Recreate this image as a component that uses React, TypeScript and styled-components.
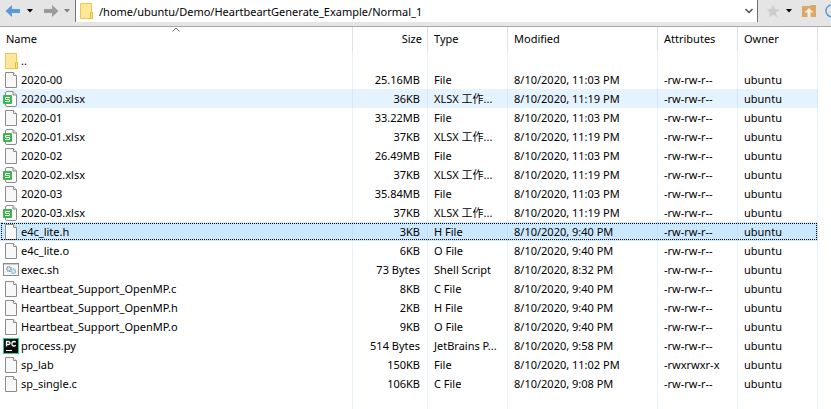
import React, { useState } from "react";
import styled, { createGlobalStyle } from "styled-components";

const GlobalStyle = createGlobalStyle`
  *, *::before, *::after { box-sizing: border-box; }
  body {
    margin: 0;
    background: #fff;
    color: #000;
    font-family: "Noto Sans", "Noto Sans CJK SC", sans-serif;
    font-size: 11px;
    line-height: 18px;
  }
  button, input { font: inherit; color: inherit; }
`;

const Page = styled.div`
  display: flex;
  flex-direction: column;
  min-height: 100vh;
  overflow: hidden;
`;

const Toolbar = styled.div`
  display: flex;
  height: 27px;
  padding-bottom: 4px;
  background: #e5e5e5;
  border-bottom: 1px solid #a9a9a9;
`;

const ToolGroup = styled.div<{ $side: "left" | "right" }>`
  display: flex;
  flex: none;
  align-items: center;
  width: ${(p) => (p.$side === "left" ? 75 : 73)}px;
  padding-left: ${(p) => (p.$side === "left" ? 4 : 6)}px;
  overflow: hidden;
`;

const IconButton = styled.button<{ $width: number }>`
  display: flex;
  flex: none;
  align-items: center;
  justify-content: center;
  width: ${(p) => p.$width}px;
  height: 20px;
  padding: 0;
  border: 0;
  background: none;
`;

const AddressBar = styled.div`
  display: flex;
  flex: 1;
  align-items: center;
  min-width: 0;
  padding-left: 2px;
  background: #fff;
  border: solid #707070;
  border-width: 0 1px;
`;

const PathInput = styled.input`
  flex: 1;
  min-width: 0;
  height: 22px;
  padding: 0;
  margin-left: 5px;
  border: 0;
  outline: 0;
  background: transparent;
`;

const ListArea = styled.main`
  display: flex;
  flex: 1;
  padding-right: 13px;
`;

const FileTable = styled.table`
  width: 100%;
  table-layout: fixed;
  border-collapse: separate;
  border-spacing: 0;
`;

const HeadCell = styled.th<{ $width?: number; $align?: "right" }>`
  position: relative;
  width: ${(p) => (p.$width ? `${p.$width}px` : "auto")};
  height: 24px;
  padding: 0;
  border-right: 1px solid #e0e0e0;
  font-weight: 400;
  text-align: ${(p) => p.$align ?? "left"};
`;

const HeadButton = styled.button`
  width: 100%;
  height: 24px;
  padding: 0 5px 0 6px;
  border: 0;
  background: none;
  text-align: inherit;
`;

const SortMark = styled.svg`
  position: absolute;
  top: 0;
  left: 50%;
  margin-left: -4px;
`;

const Row = styled.tr<{ $state?: "hover" | "selected" }>`
  height: 19px;
  background: ${(p) =>
    p.$state === "selected" ? "#cce8ff" : p.$state === "hover" ? "#e5f3ff" : "transparent"};
  outline: ${(p) => (p.$state === "selected" ? "1px dotted #000" : "none")};
  outline-offset: -2px;
`;

const Cell = styled.td<{ $align?: "right" }>`
  height: 19px;
  padding: 0 7px 0 6px;
  border-right: 1px solid rgba(120, 180, 235, 0.17);
  line-height: 18px;
  overflow: hidden;
  text-align: ${(p) => p.$align ?? "left"};
  text-overflow: ellipsis;
  white-space: nowrap;
`;

const NameCell = styled(Cell)`
  padding-left: 3px;
`;

const FileName = styled.span`
  display: flex;
  align-items: center;
  gap: 2px;
`;

const FillRow = styled.tr`
  height: 100%;
`;

type Kind = "folder" | "file" | "sheet" | "script" | "python";

const FolderIcon = () => (
  <svg width="16" height="18" viewBox="0 0 16 18" aria-hidden="true">
    <path d="M2.5 1.5h11v9h1v6h-12z" fill="#ffe699" stroke="#eec84c" />
    <path d="M3 2h10v14H3z" fill="#ffe79b" />
    <path d="M12.5 10.5h2v6h-2z" fill="#ffe28a" stroke="#e9bd3b" />
  </svg>
);

const Sheet = () => (
  <>
    <path d="M2.5.5h8l3 3v12h-11z" fill="#f8f8f8" stroke="#8c8c8c" />
    <path d="M10.5.5v3h3" fill="#fff" stroke="#8c8c8c" />
  </>
);

function FileIcon({ kind }: { kind: Kind }) {
  if (kind === "folder") return <FolderIcon />;
  return (
    <svg width="16" height="16" viewBox="0 0 16 16" aria-hidden="true">
      {kind === "file" && <Sheet />}
      {kind === "sheet" && (
        <>
          <path d="M2.5 2q0-1.500 1.500-1.500h6l3.500 3.500v10q0 1.500-1.500 1.500H4q-1.500 0-1.500-1.500z" fill="#fff" stroke="#8c8c8c" />
          <path d="M10 .5v3.500h3.500" fill="#ddd" stroke="#8c8c8c" />
          <rect y="4" width="9" height="9" rx="1" fill="#3cb54a" />
          <path d="M7 6.500H2.500v2h4v2H2" fill="none" stroke="#fff" />
        </>
      )}
      {kind === "script" && (
        <>
          <rect x=".5" y="1.500" width="15" height="12" fill="#f7f7f7" stroke="#858b90" />
          <path d="M1 2.500h14" stroke="#c9ced2" />
          <circle cx="6" cy="7" r="2.200" fill="#e5e5e5" stroke="#8b9299" strokeWidth="1.600" strokeDasharray="1.200 .6" />
          <circle cx="10.300" cy="9.200" r="2.200" fill="#d7edfa" stroke="#82b5d6" strokeWidth="1.600" strokeDasharray="1.200 .6" />
        </>
      )}
      {kind === "python" && (
        <>
          <rect width="16" height="16" fill="#20d48a" />
          <rect x="1" y="1" width="14" height="14" fill="#0b0b0b" />
          <path d="M3.500 8.500V3.500h1.800q1.700 0 1.700 1.500t-1.700 1.500H3.500" fill="none" stroke="#fff" strokeWidth="1.300" />
          <path d="M12.700 4.300Q12 3.500 11 3.500 8.900 3.500 8.900 5.800T11 8q1 0 1.700-.8" fill="none" stroke="#fff" strokeWidth="1.300" />
          <path d="M3 12.500h6" stroke="#fff" />
        </>
      )}
    </svg>
  );
}

const Arrow = ({ color, flip }: { color: string; flip?: boolean }) => (
  <svg width="16" height="14" viewBox="0 0 16 14" aria-hidden="true">
    <path
      d={flip ? "M15.500 7L9 1v4H1v4h8v4z" : "M.5 7L7 1v4h8v4H7v4z"}
      fill={color}
    />
  </svg>
);

const Caret = ({ color }: { color: string }) => (
  <svg width="6" height="4" viewBox="0 0 6 4" aria-hidden="true">
    <path d="M0 0h6L3 3.500z" fill={color} />
  </svg>
);

interface Entry {
  name: string;
  kind: Kind;
  size?: string;
  type?: string;
  modified?: string;
  attrs?: string;
  owner?: string;
}

const entry = (
  name: string,
  kind: Kind,
  size: string,
  type: string,
  time: string,
  attrs = "-rw-rw-r--",
): Entry => ({ name, kind, size, type, modified: `8/10/2020, ${time} PM`, attrs, owner: "ubuntu" });

const entries: Entry[] = [
  { name: "..", kind: "folder" },
  entry("2020-00", "file", "25.16MB", "File", "11:03"),
  entry("2020-00.xlsx", "sheet", "36KB", "XLSX 工作...", "11:19"),
  entry("2020-01", "file", "33.22MB", "File", "11:03"),
  entry("2020-01.xlsx", "sheet", "37KB", "XLSX 工作...", "11:19"),
  entry("2020-02", "file", "26.49MB", "File", "11:03"),
  entry("2020-02.xlsx", "sheet", "37KB", "XLSX 工作...", "11:19"),
  entry("2020-03", "file", "35.84MB", "File", "11:03"),
  entry("2020-03.xlsx", "sheet", "37KB", "XLSX 工作...", "11:19"),
  entry("e4c_lite.h", "file", "3KB", "H File", "9:40"),
  entry("e4c_lite.o", "file", "6KB", "O File", "9:40"),
  entry("exec.sh", "script", "73 Bytes", "Shell Script", "8:32"),
  entry("Heartbeat_Support_OpenMP.c", "file", "8KB", "C File", "9:40"),
  entry("Heartbeat_Support_OpenMP.h", "file", "2KB", "H File", "9:40"),
  entry("Heartbeat_Support_OpenMP.o", "file", "9KB", "O File", "9:40"),
  entry("process.py", "python", "514 Bytes", "JetBrains P...", "9:58"),
  entry("sp_lab", "file", "150KB", "File", "11:02", "-rwxrwxr-x"),
  entry("sp_single.c", "file", "106KB", "C File", "9:08"),
];

const columns: { label: string; width?: number; align?: "right" }[] = [
  { label: "Name" },
  { label: "Size", width: 75, align: "right" },
  { label: "Type", width: 80 },
  { label: "Modified", width: 150 },
  { label: "Attributes", width: 80 },
  { label: "Owner", width: 80 },
];

export default function App() {
  const [path, setPath] = useState("/home/ubuntu/Demo/HeartbeartGenerate_Example/Normal_1");
  const [selected, setSelected] = useState("e4c_lite.h");
  const hovered = "2020-00.xlsx";

  return (
    <Page>
      <GlobalStyle />
      <Toolbar>
        <ToolGroup $side="left">
          <IconButton $width={17} aria-label="Back"><Arrow color="#5b9bd5" /></IconButton>
          <IconButton $width={17} aria-label="Back history"><Caret color="#000" /></IconButton>
          <IconButton $width={25} aria-label="Forward"><Arrow color="#9b9b9b" flip /></IconButton>
          <IconButton $width={8} aria-label="Forward history"><Caret color="#808080" /></IconButton>
        </ToolGroup>
        <AddressBar>
          <FolderIcon />
          <PathInput aria-label="Path" value={path} onChange={(e) => setPath(e.target.value)} />
          <IconButton $width={16} aria-label="Show locations">
            <svg width="8" height="6" viewBox="0 0 8 6" aria-hidden="true">
              <path d="M.5 1L4 4.500 7.500 1" fill="none" stroke="#444" strokeWidth="1.300" />
            </svg>
          </IconButton>
        </AddressBar>
        <ToolGroup $side="right">
          <IconButton $width={18} aria-label="Bookmarks">
            <svg width="14" height="14" viewBox="0 0 14 14" aria-hidden="true">
              <path d="M7 .8l1.900 4.300 4.600.4-3.500 3.100 1 4.600L7 10.800l-4 2.400 1-4.600L.5 5.500l4.600-.4z" fill="#cdcdcd" />
            </svg>
          </IconButton>
          <IconButton $width={14} aria-label="Bookmark list"><Caret color="#000" /></IconButton>
          <IconButton $width={26} aria-label="Parent folder">
            <svg width="14" height="14" viewBox="0 0 14 14" aria-hidden="true">
              <path d="M0 2h8l1-1h5v12H0z" fill="#dba766" />
              <path d="M7 4l4.500 4.500H8.500V13h-3V8.500h-3z" fill="#f2efe9" />
            </svg>
          </IconButton>
          <IconButton $width={20} aria-label="Refresh">
            <svg width="14" height="14" viewBox="0 0 14 14" aria-hidden="true">
              <path d="M12 3.500A6 6 0 1 0 13 7" fill="none" stroke="#5b9bd5" strokeWidth="1.500" />
            </svg>
          </IconButton>
        </ToolGroup>
      </Toolbar>
      <ListArea>
        <FileTable>
          <thead>
            <tr>
              {columns.map((c) => (
                <HeadCell key={c.label} $width={c.width} $align={c.align}>
                  <HeadButton>{c.label}</HeadButton>
                  {c.label === "Name" && (
                    <SortMark width="8" height="5" viewBox="0 0 8 5" aria-hidden="true">
                      <path d="M.5 4.500L4 1l3.500 3.500" fill="none" stroke="#666" />
                    </SortMark>
                  )}
                </HeadCell>
              ))}
            </tr>
          </thead>
          <tbody>
            {entries.map((e) => (
              <Row
                key={e.name}
                $state={e.name === selected ? "selected" : e.name === hovered ? "hover" : undefined}
                aria-selected={e.name === selected}
                onClick={() => setSelected(e.name)}
              >
                <NameCell>
                  <FileName><FileIcon kind={e.kind} />{e.name}</FileName>
                </NameCell>
                <Cell $align="right">{e.size}</Cell>
                <Cell>{e.type}</Cell>
                <Cell>{e.modified}</Cell>
                <Cell>{e.attrs}</Cell>
                <Cell>{e.owner}</Cell>
              </Row>
            ))}
            <FillRow>
              {columns.map((c) => <Cell key={c.label} />)}
            </FillRow>
          </tbody>
        </FileTable>
      </ListArea>
    </Page>
  );
}
